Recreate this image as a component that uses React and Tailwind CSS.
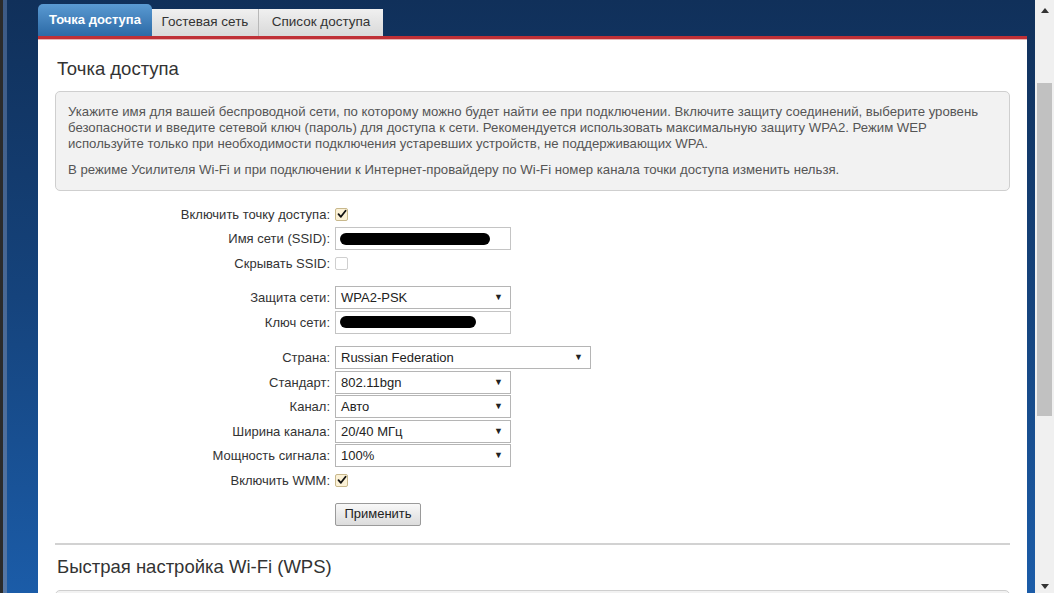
import React from "react";

const font = { fontFamily: '"Liberation Sans", Arial, sans-serif' };

function Check({ checked }) {
  return checked ? (
    <span className="inline-flex items-center justify-center w-[13px] h-[13px] rounded-[2px] border border-[#c8b88c] bg-[#fbf1d6]">
      <svg width="10" height="10" viewBox="0 0 10 10">
        <path d="M1.5 5.2 L3.9 7.8 L8.6 1.8" fill="none" stroke="#111" strokeWidth="1.8" strokeLinecap="round" strokeLinejoin="round" />
      </svg>
    </span>
  ) : (
    <span className="inline-block w-[13px] h-[13px] rounded-[2px] border border-[#cfcfcf] bg-white" />
  );
}

function Select({ value, wide }) {
  return (
    <div className={`${wide ? "w-[256px]" : "w-[176px]"} h-[23px] border border-[#b5b5b5] bg-white flex items-center justify-between pl-[5px] pr-[7px] text-[13px] text-[#222]`}>
      <span>{value}</span>
      <span className="text-[9px] text-[#222]">▼</span>
    </div>
  );
}

function Input({ blob }) {
  return (
    <div className="w-[176px] h-[23px] border border-[#c4c4c4] bg-white flex items-center pl-[4px]">
      <span className={`${blob} h-[12px] bg-black rounded-[6px]`} />
    </div>
  );
}

function Row({ label, children, className = "" }) {
  return (
    <div className={`flex items-center h-[24.5px] ${className}`}>
      <div className="w-[280px] text-right text-[13px] text-[#333] pr-[5px] whitespace-nowrap">{label}</div>
      {children}
    </div>
  );
}

export default function App() {
  return (
    <div className="w-[1054px] h-[593px] overflow-hidden flex" style={font}>
      <div className="w-[3px] bg-[#2b2b2b]" />
      <div className="w-[4px] bg-gradient-to-b from-[#3c5a85] to-[#5577a6]" />
      <div className="flex-1 flex flex-col bg-gradient-to-b from-[#10305a] via-[#15437c] to-[#1b5ca8]">
        <div className="h-[3px] bg-[#5676a0]" />
        <div className="flex-1 flex flex-col pl-[31px] pr-[8px] pt-[4px]">
          {/* tabs */}
          <div className="flex items-end h-[32px]">
            <div className="w-[114px] h-[32px] rounded-t-[5px] bg-gradient-to-b from-[#5a9ad2] to-[#2c6aa6] flex items-center justify-center text-white font-bold text-[13px]">
              Точка доступа
            </div>
            <div className="w-[107px] h-[27px] bg-gradient-to-b from-[#f0f0f0] to-[#d9d9d9] border-r border-[#b8b8b8] flex items-center justify-center text-[13.5px] text-[#333]">
              Гостевая сеть
            </div>
            <div className="w-[124px] h-[27px] bg-gradient-to-b from-[#f0f0f0] to-[#d9d9d9] flex items-center justify-center text-[13.5px] text-[#333]">
              Список доступа
            </div>
          </div>
          <div className="h-[3px] bg-[#bf3036]" />
          <div className="h-[1px] bg-[#e8b5b5]" />
          {/* panel */}
          <div className="flex-1 bg-white px-[17px] pt-[18px]">
            <h1 className="text-[18.5px] text-[#333] leading-[22px] pl-[2px]">Точка доступа</h1>
            <div className="mt-[11px] h-[100px] bg-[#f2f2f2] border border-[#cfcfcf] rounded-[5px] pl-[12px] pt-[12px] text-[13.2px] leading-[16px] text-[#555] whitespace-nowrap">
              <p>
                Укажите имя для вашей беспроводной сети, по которому можно будет найти ее при подключении. Включите защиту соединений, выберите уровень
                <br />
                безопасности и введите сетевой ключ (пароль) для доступа к сети. Рекомендуется использовать максимальную защиту WPA2. Режим WEP
                <br />
                используйте только при необходимости подключения устаревших устройств, не поддерживающих WPA.
              </p>
              <p className="mt-[10px]">
                В режиме Усилителя Wi-Fi и при подключении к Интернет-провайдеру по Wi-Fi номер канала точки доступа изменить нельзя.
              </p>
            </div>
            <div className="mt-[11px]">
              <Row label="Включить точку доступа:"><Check checked /></Row>
              <Row label="Имя сети (SSID):"><Input blob="w-[150px]" /></Row>
              <Row label="Скрывать SSID:"><Check /></Row>
              <Row label="Защита сети:" className="mt-[10px]"><Select value="WPA2-PSK" /></Row>
              <Row label="Ключ сети:"><Input blob="w-[136px]" /></Row>
              <Row label="Страна:" className="mt-[11px]"><Select value="Russian Federation" wide /></Row>
              <Row label="Стандарт:"><Select value="802.11bgn" /></Row>
              <Row label="Канал:"><Select value="Авто" /></Row>
              <Row label="Ширина канала:"><Select value="20/40 МГц" /></Row>
              <Row label="Мощность сигнала:"><Select value="100%" /></Row>
              <Row label="Включить WMM:"><Check checked /></Row>
              <div className="flex mt-[10px]">
                <div className="w-[280px]" />
                <button className="w-[86px] h-[23px] border border-[#9a9a9a] rounded-[2px] bg-gradient-to-b from-[#f8f8f8] to-[#dcdcdc] text-[13px] text-[#222]">
                  Применить
                </button>
              </div>
            </div>
            <div className="mt-[17px] h-[2px] bg-[#d2d2d2]" />
            <h2 className="mt-[11px] text-[18.5px] leading-[22px] text-[#333] pl-[2px]">Быстрая настройка Wi-Fi (WPS)</h2>
            <div className="mt-[12px] h-[20px] border border-[#cfcfcf] rounded-t-[5px] bg-[#f2f2f2]" />
          </div>
        </div>
      </div>
      {/* scrollbar */}
      <div className="w-[19px] bg-[#f0f0f0] flex flex-col items-center">
        <div className="h-[20px] flex items-center justify-center">
          <svg width="8" height="5" viewBox="0 0 8 5"><path d="M0 5 L4 0 L8 5 Z" fill="#333" /></svg>
        </div>
        <div className="mt-[63px] w-[15px] h-[333px] bg-[#c1c1c1]" />
        <div className="flex-1" />
        <div className="h-[14px] flex items-center justify-center">
          <svg width="8" height="5" viewBox="0 0 8 5"><path d="M0 0 L4 5 L8 0 Z" fill="#333" /></svg>
        </div>
      </div>
    </div>
  );
}
